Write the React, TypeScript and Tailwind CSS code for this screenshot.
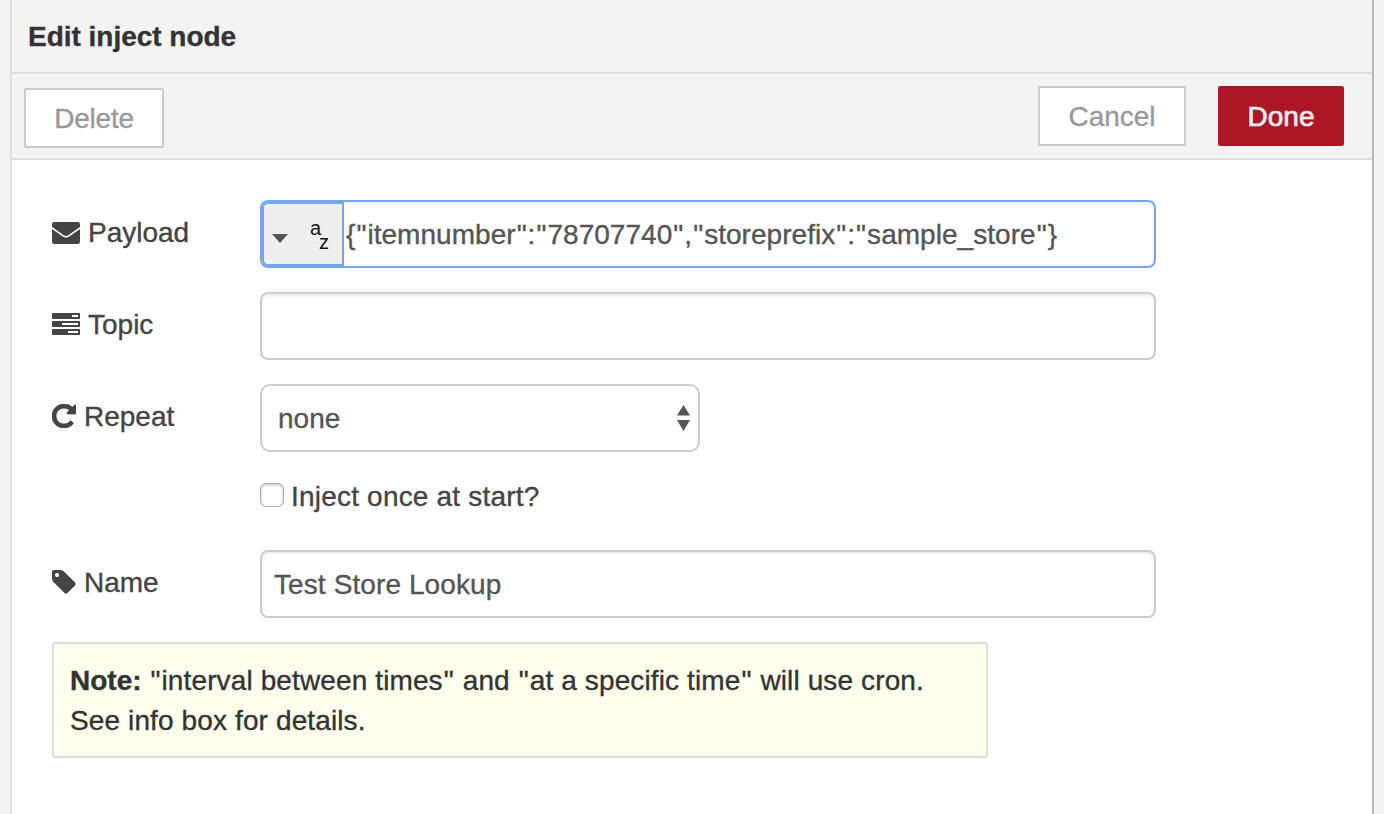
import type { ReactNode } from "react";

function Icon({ d, box, className }: { d: string; box: string; className: string }) {
  return (
    <svg viewBox={box} className={className} fill="currentColor" aria-hidden="true">
      <path d={d} />
    </svg>
  );
}

function Envelope() {
  return (
    <svg viewBox="0 0 28 22" className="mt-[2px] h-[22px] w-7" fill="currentColor" aria-hidden="true">
      <rect width="28" height="22" rx="2.2" />
      <path
        d="M-1 5.2 0 5.9 11.2 13.9Q14 15.6 16.8 13.9L28 5.9 29 5.2"
        fill="none"
        stroke="#fff"
        strokeWidth="1.6"
      />
    </svg>
  );
}

const TASKS =
  "M1024 1408h640v-128h-640v128zm-384-512h1024v-128h-1024v128zm640-512h384v-128h-384v128zm512 832v256q0 26-19 45t-45 19h-1664q-26 0-45-19t-19-45v-256q0-26 19-45t45-19h1664q26 0 45 19t19 45zm0-512v256q0 26-19 45t-45 19h-1664q-26 0-45-19t-19-45v-256q0-26 19-45t45-19h1664q26 0 45 19t19 45zm0-512v256q0 26-19 45t-45 19h-1664q-26 0-45-19t-19-45v-256q0-26 19-45t45-19h1664q26 0 45 19t19 45z";
const REPEAT =
  "M1664 256v448q0 26-19 45t-45 19h-448q-42 0-59-40-17-39 14-69l138-138q-148-137-349-137-104 0-198.5 40.5t-163.5 109.5-109.5 163.5-40.5 198.5 40.5 198.5 109.5 163.5 163.5 109.5 198.5 40.5q119 0 225-52t179-147q7-10 23-12 15 0 25 9l137 138q9 8 9.5 20.5t-7.5 22.5q-109 132-264 204.5t-327 72.5q-156 0-298-61t-245-164-164-245-61-298 61-298 164-245 245-164 298-61q147 0 284.5 55.5t244.5 156.5l130-129q29-31 70-14 39 17 39 59z";
const TAG =
  "M576 448q0-53-37.5-90.5t-90.5-37.5-90.5 37.5-37.5 90.5 37.5 90.5 90.5 37.5 90.5-37.5 37.5-90.5zm1067 576q0 53-37 90l-491 492q-39 37-91 37-53 0-90-37l-715-716q-38-37-64.5-101t-26.5-117v-416q0-52 38-90t90-38h416q53 0 117 26.5t102 64.5l715 714q37 39 37 91z";

function Row({ icon, label, children }: { icon: ReactNode; label: string; children: ReactNode }) {
  return (
    <div className="flex h-[68px]">
      <div className="flex h-16 w-[208px] shrink-0 items-center gap-2 text-[#444]">
        {icon}
        <span className="pt-[2px]">{label}</span>
      </div>
      {children}
    </div>
  );
}

/* Straight quotes get a pixel of air on each side. */
function Quoted({ text }: { text: string }) {
  return (
    <>
      {text.split(/(")/).map((part, i) =>
        part === '"' ? (
          <span key={i} className="mx-px">
            {part}
          </span>
        ) : (
          part
        ),
      )}
    </>
  );
}

export default function App() {
  return (
    <div className="flex h-[814px] w-[1384px] overflow-hidden bg-[#f3f3f3] pl-[10px] font-['Liberation_Sans',Arial,sans-serif] text-[28px] leading-10 whitespace-nowrap text-[#333] [-webkit-text-stroke:0.35px_currentColor]">
      <main className="flex w-[1364px] flex-col border-r-2 border-l-2 border-r-[#bbb] border-l-[#ddd] bg-white">
        <header className="flex h-[74px] items-center border-b-2 border-[#ddd] bg-[#f3f3f3] pt-[2px] pl-4 font-bold">
          <span className="tracking-[-0.02px]">Edit inject node</span>
        </header>
        <div className="flex h-[86px] items-start border-b-2 border-[#ddd] bg-[#f3f3f3] pt-3 pr-7 pl-3 text-[#999]">
          <button className="mt-0.5 h-[60px] w-[140px] rounded-[2px] border-2 border-[#ccc] bg-white pt-px tracking-[-0.2px]">
            Delete
          </button>
          <button className="ml-auto h-[60px] w-[148px] rounded-[2px] border-2 border-[#ccc] bg-white pt-px">
            Cancel
          </button>
          <button className="ml-8 h-[60px] w-[126px] rounded-[2px] bg-[#ad1625] pt-px text-[#eee] [-webkit-text-stroke:0.7px_#eee]">
            Done
          </button>
        </div>

        <form className="flex flex-col pt-10 pl-10">
          <Row icon={<Envelope />} label="Payload">
            <div className="flex h-[68px] w-[896px] rounded-[8px] border-2 border-[#72a7ea] text-[#555]">
              <div className="flex h-16 w-[82px] rounded-l-[6px] border-2 border-[#72a7ea] bg-[#efefef] pl-2">
                <svg viewBox="0 0 16 9" className="mt-[30px] h-[9px] w-4 shrink-0" fill="#555">
                  <path d="M0 0h16L8 9z" />
                </svg>
                <div className="mt-[14px] ml-[22px] flex text-[20px] leading-5 text-[#111] [-webkit-text-stroke:0]">
                  <span className="w-[9px]">a</span>
                  <span className="pt-[14px]">z</span>
                </div>
              </div>
              <span className="mt-[13px] ml-[2px] tracking-[0.04px]">
                <Quoted text={'{"itemnumber":"78707740","storeprefix":"sample_store"}'} />
              </span>
            </div>
          </Row>
          <div className="mt-6">
            <Row icon={<Icon d={TASKS} box="0 128 1792 1408" className="h-[22px] w-7" />} label="Topic">
              <div className="h-[68px] w-[896px] rounded-[8px] border-2 border-[#ccc] shadow-[inset_0_2px_3px_rgba(0,0,0,0.075)]" />
            </Row>
          </div>
          <div className="mt-6">
            <Row
              icon={<Icon d={REPEAT} box="128 128 1536 1536" className="h-6 w-6 stroke-current stroke-[50]" />}
              label="Repeat"
            >
              <div className="flex h-[68px] w-[440px] items-center justify-between rounded-[10px] border-2 border-[#ccc] pr-2 pl-4 text-[#555]">
                <span className="pt-[2px]">none</span>
                <svg viewBox="0 0 13 26" className="h-[26px] w-[13px]" fill="#555">
                  <path d="M0 10.5 6.5 0 13 10.5zM0 15h13L6.5 26z" />
                </svg>
              </div>
            </Row>
          </div>
          <div className="mt-[25px] ml-[208px] flex h-10 items-center text-[#444]">
            <div className="mb-[4px] h-6 w-6 rounded-[6px] border border-[#aaa] shadow-[inset_0_1px_3px_rgba(0,0,0,0.25)]" />
            <span className="ml-[7px] tracking-[0.2px]">Inject once at start?</span>
          </div>
          <div className="mt-[33px]">
            <Row icon={<Icon d={TAG} box="128 128 1536 1536" className="h-6 w-6" />} label="Name">
              <div className="flex h-[68px] w-[896px] items-center rounded-[8px] border-2 border-[#ccc] pl-3 text-[#555] shadow-[inset_0_2px_3px_rgba(0,0,0,0.075)]">
                <span className="pt-[2px] tracking-[0.1px]">Test Store Lookup</span>
              </div>
            </Row>
          </div>
          <div className="mt-6 h-[116px] w-[936px] rounded-[3px] border-2 border-[#ddd] bg-[#ffffee] px-4 pt-[17px] tracking-[0.12px]">
            <p>
              <b className="tracking-normal">Note:</b>{" "}
              <Quoted text={'"interval between times" and "at a specific time" will use cron.'} />
            </p>
            <p>See info box for details.</p>
          </div>
        </form>
      </main>
    </div>
  );
}
